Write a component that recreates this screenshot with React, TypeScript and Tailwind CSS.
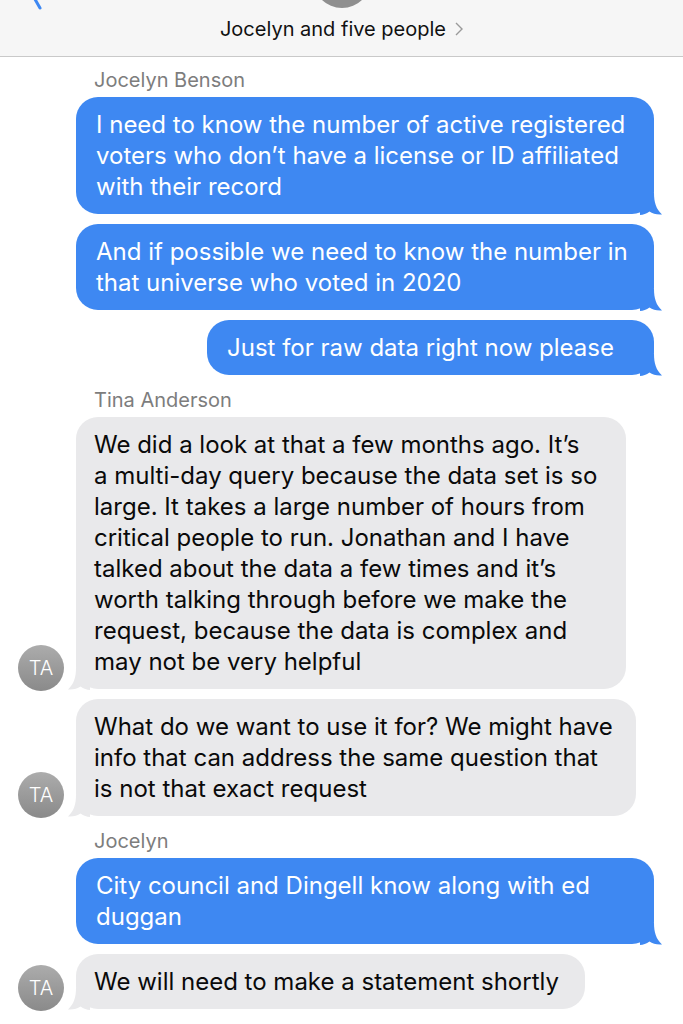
import React from 'react';

type Msg =
  | { kind: 'label'; text: string }
  | { kind: 'out'; lines: string[]; w: number }
  | { kind: 'in'; lines: string[]; w: number; avatar?: boolean };

const messages: Msg[] = [
  { kind: 'label', text: 'Jocelyn Benson' },
  {
    kind: 'out',
    w: 578,
    lines: [
      'I need to know the number of active registered',
      'voters who don\u2019t have a license or ID affiliated',
      'with their record',
    ],
  },
  {
    kind: 'out',
    w: 578,
    lines: ['And if possible we need to know the number in', 'that universe who voted in 2020'],
  },
  { kind: 'out', w: 447, lines: ['Just for raw data right now please'] },
  { kind: 'label', text: 'Tina Anderson' },
  {
    kind: 'in',
    w: 550,
    avatar: true,
    lines: [
      'We did a look at that a few months ago. It\u2019s',
      'a multi-day query because the data set is so',
      'large. It takes a large number of hours from',
      'critical people to run. Jonathan and I have',
      'talked about the data a few times and it\u2019s',
      'worth talking through before we make the',
      'request, because the data is complex and',
      'may not be very helpful',
    ],
  },
  {
    kind: 'in',
    w: 560,
    avatar: true,
    lines: [
      'What do we want to use it for? We might have',
      'info that can address the same question that',
      'is not that exact request',
    ],
  },
  { kind: 'label', text: 'Jocelyn' },
  {
    kind: 'out',
    w: 578,
    lines: ['City council and Dingell know along with ed', 'duggan'],
  },
  { kind: 'in', w: 509, avatar: true, lines: ['We will need to make a statement shortly'] },
];

const Tail = ({ color, left }: { color: string; left?: boolean }) => (
  <svg
    width="22"
    height="22"
    viewBox="0 0 22 22"
    className={left ? 'absolute -left-[8px] -bottom-[1px] -scale-x-100' : 'absolute -right-[8px] -bottom-[1px]'}
  >
    <path d="M0 0 H14 C14 9 16 16 22 21.5 C17 22 12.5 20.5 9.5 18.5 C6.5 20.5 3 22 0 22 Z" fill={color} />
  </svg>
);

const Avatar = () => (
  <div className="w-[46px] h-[46px] rounded-full bg-gradient-to-b from-[#acacac] to-[#8a8a8a] flex items-center justify-center text-white text-[20px] font-light shrink-0 mb-[-2px]">
    TA
  </div>
);

export default function App() {
  return (
    <div
      className="w-[683px] h-[1024px] overflow-hidden bg-white"
      style={{ fontFamily: 'Inter, Roboto, "Liberation Sans", sans-serif' }}
    >
      {/* Header */}
      <div className="relative h-[57px] bg-[#f6f6f6] border-b border-[#c9c9c9] flex flex-col items-center">
        <svg width="16" height="12" viewBox="0 0 16 12" className="absolute left-[30px] top-0">
          <path d="M2 -6 L10 8" stroke="#3e88f2" strokeWidth="3" strokeLinecap="round" fill="none" />
        </svg>
        <div className="h-[8px] w-[58px] overflow-hidden">
          <div className="w-[58px] h-[58px] rounded-full bg-[#8f8f8f] -mt-[50px]" />
        </div>
        <div className="mt-[9px] flex items-center gap-[9px] text-[20px] text-[#111] leading-[24px]">
          <span>Jocelyn and five people</span>
          <svg width="8" height="14" viewBox="0 0 8 14">
            <path d="M1 1 L7 7 L1 13" stroke="#9a9a9a" strokeWidth="1.4" fill="none" />
          </svg>
        </div>
      </div>

      {/* Messages */}
      <div className="flex flex-col">
        {messages.map((m, i) => {
          if (m.kind === 'label') {
            return (
              <div
                key={i}
                className={`pl-[94px] text-[20px] leading-[24px] text-[#7d7d7d] ${
                  i === 0 ? 'mt-[11px]' : 'mt-[13px]'
                } mb-[5px]`}
              >
                {m.text}
              </div>
            );
          }
          const prev = messages[i - 1];
          const top = prev && prev.kind !== 'label' ? 'mt-[10px]' : '';
          if (m.kind === 'out') {
            return (
              <div key={i} className={`flex justify-end pr-[29px] ${top}`}>
                <div
                  className="relative rounded-[22px] bg-[#3e88f2] text-white text-[24px] leading-[31px] pl-[20px] py-[12px] whitespace-nowrap"
                  style={{ width: m.w }}
                >
                  {m.lines.map((l, j) => (
                    <div key={j}>{l}</div>
                  ))}
                  <Tail color="#3e88f2" />
                </div>
              </div>
            );
          }
          return (
            <div key={i} className={`flex items-end pl-[18px] gap-[12px] ${top}`}>
              <Avatar />
              <div
                className="relative rounded-[22px] bg-[#e9e9eb] text-[#0a0a0a] text-[24px] leading-[31px] pl-[18px] py-[12px] whitespace-nowrap"
                style={{ width: m.w }}
              >
                {m.lines.map((l, j) => (
                  <div key={j}>{l}</div>
                ))}
                <Tail color="#e9e9eb" left />
              </div>
            </div>
          );
        })}
      </div>
    </div>
  );
}
